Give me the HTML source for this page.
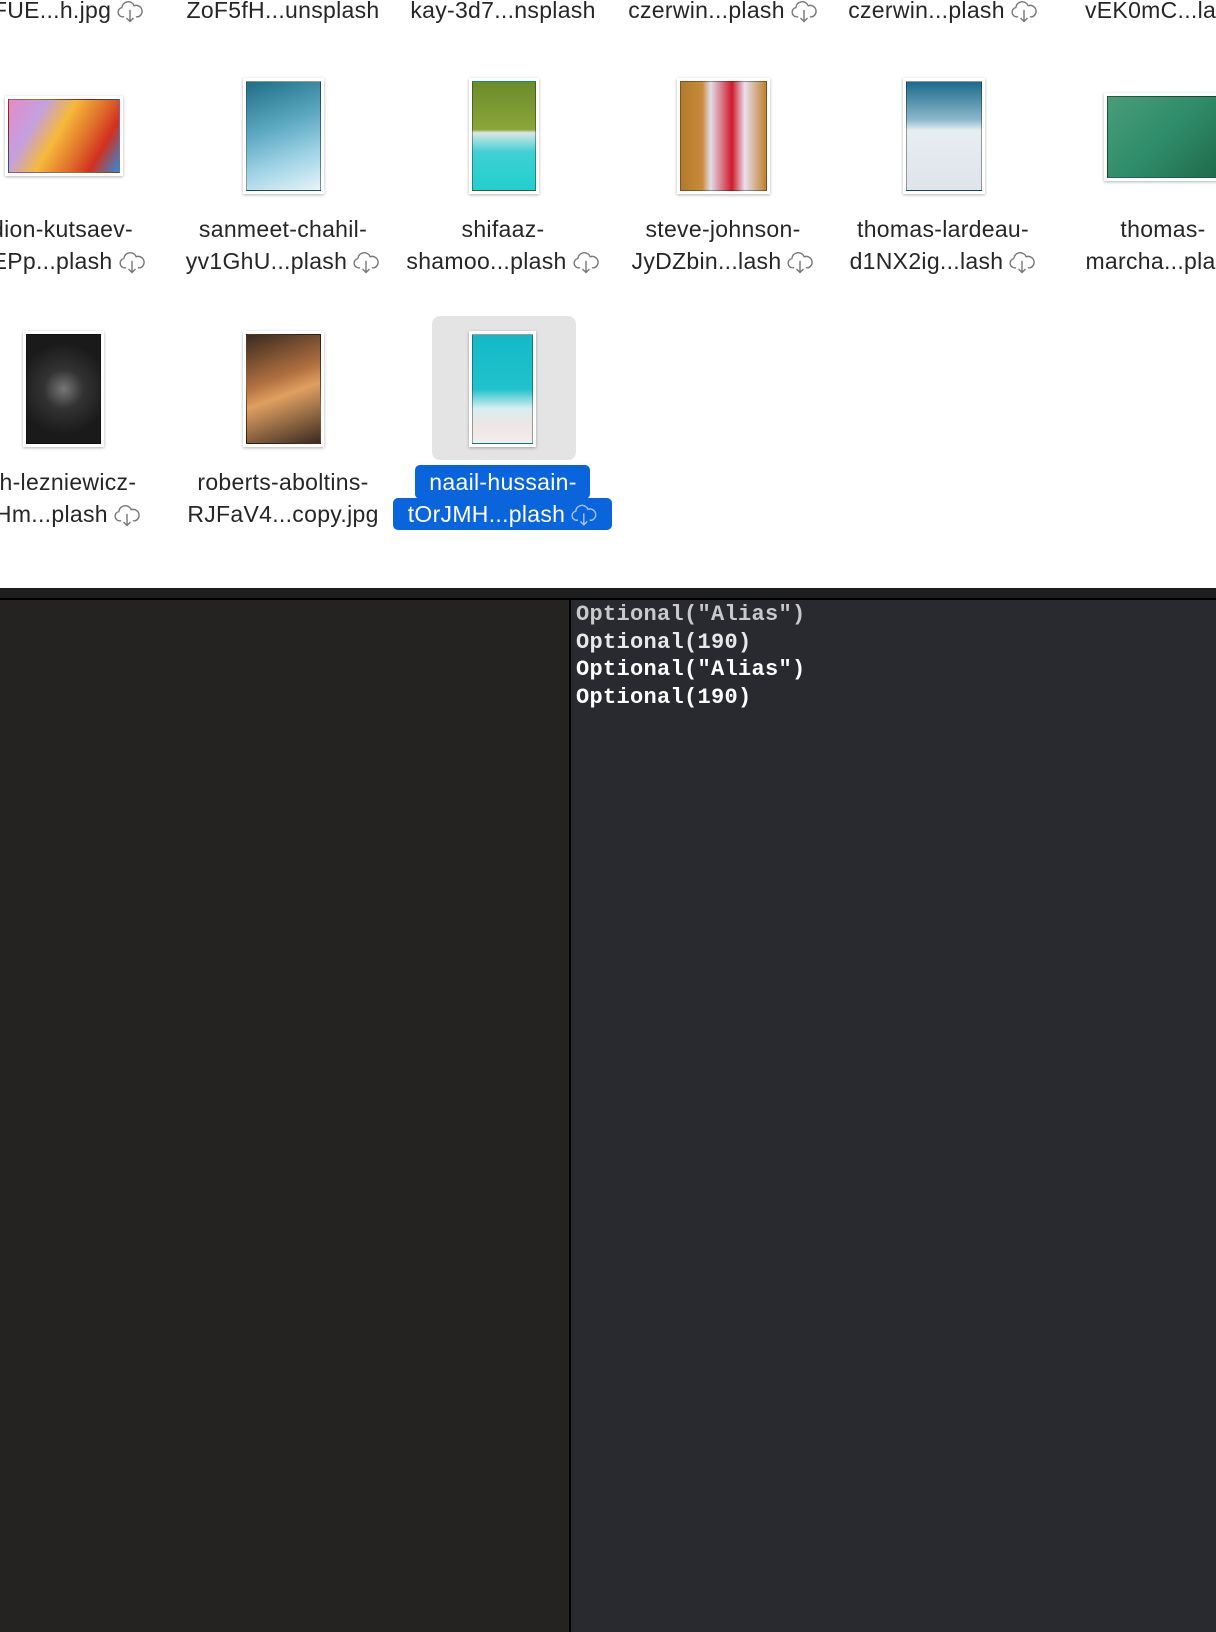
<!DOCTYPE html>
<html><head><meta charset="utf-8"><style>
*{margin:0;padding:0;box-sizing:border-box}
body{width:1216px;height:1632px;overflow:hidden;background:#fff;position:relative;font-family:"Liberation Sans",sans-serif}
.t{position:absolute;width:240px;text-align:center;font-size:23px;letter-spacing:0.3px;color:#262626;line-height:32px;white-space:nowrap}
.f{position:absolute;background:#fff;padding:3px;box-shadow:0 1px 3px rgba(0,0,0,.3)}
.f div{width:100%;height:100%;border:1px solid rgba(0,0,0,.35)}
.c{display:inline-block;width:28px;height:24px;vertical-align:-5px;margin-left:5px}
.m{position:absolute;left:576px;font-family:"Liberation Mono","DejaVu Sans Mono",monospace;font-weight:bold;font-size:22px;line-height:27.7px;color:#fff;letter-spacing:0.3px}
</style></head><body>
<svg width="0" height="0" style="position:absolute"><defs><symbol id="cl" viewBox="0 0 24 20"><path d="M7 15H5.5A4 4 0 0 1 5 7.1 5.5 5.5 0 0 1 15.6 5.5 4.2 4.2 0 0 1 19 15H17" fill="none" stroke="#777" stroke-width="1.2"/><path d="M12 9v10M9 16l3 3 3-3" fill="none" stroke="#777" stroke-width="1.2"/></symbol></defs></svg>

<div class="t" style="left:-58px;top:-6px">5FUE...h.jpg<svg class="c"><use href="#cl"/></svg></div>
<div class="t" style="left:163px;top:-6px">ZoF5fH...unsplash</div>
<div class="t" style="left:383px;top:-6px">kay-3d7...nsplash</div>
<div class="t" style="left:603px;top:-6px">czerwin...plash<svg class="c"><use href="#cl"/></svg></div>
<div class="t" style="left:823px;top:-6px">czerwin...plash<svg class="c"><use href="#cl"/></svg></div>
<div class="t" style="left:1043px;top:-6px">vEK0mC...lash</div>

<div class="f" style="left:5px;top:96px;width:118px;height:80px"><div style="background:linear-gradient(120deg,#e58ac8 0%,#c4a0e0 25%,#f6b93a 45%,#e0702a 65%,#d23020 80%,#2a8ee0 100%)"></div></div>
<div class="f" style="left:243px;top:78px;width:81px;height:116px"><div style="background:linear-gradient(160deg,#1f6d86 0%,#5aa7c0 40%,#9fd3e6 70%,#e6f4f8 100%)"></div></div>
<div class="f" style="left:469px;top:78px;width:70px;height:116px"><div style="background:linear-gradient(180deg,#6b8c2a 0%,#8aa53a 44%,#d8e8e6 47%,#40cfd2 65%,#22d0cf 100%)"></div></div>
<div class="f" style="left:677px;top:78px;width:93px;height:116px"><div style="background:linear-gradient(90deg,#b47a2a 0%,#c98a3c 25%,#e0dde8 35%,#d01a2a 60%,#e8e0ee 75%,#c08030 100%)"></div></div>
<div class="f" style="left:903px;top:78px;width:82px;height:116px"><div style="background:linear-gradient(180deg,#1c6a8d 0%,#8bb8cc 35%,#e6eef2 45%,#dfe4ea 100%)"></div></div>
<div class="f" style="left:1104px;top:93px;width:120px;height:88px"><div style="background:linear-gradient(135deg,#4a9c7a 0%,#2f8c6a 50%,#1e6a4a 100%)"></div></div>

<div class="t" style="left:-58px;top:213px">dion-kutsaev-<br>oEPp...plash<svg class="c"><use href="#cl"/></svg></div>
<div class="t" style="left:163px;top:213px">sanmeet-chahil-<br>yv1GhU...plash<svg class="c"><use href="#cl"/></svg></div>
<div class="t" style="left:383px;top:213px">shifaaz-<br>shamoo...plash<svg class="c"><use href="#cl"/></svg></div>
<div class="t" style="left:603px;top:213px">steve-johnson-<br>JyDZbin...lash<svg class="c"><use href="#cl"/></svg></div>
<div class="t" style="left:823px;top:213px">thomas-lardeau-<br>d1NX2ig...lash<svg class="c"><use href="#cl"/></svg></div>
<div class="t" style="left:1043px;top:213px">thomas-<br>marcha...plash</div>

<div style="position:absolute;left:432px;top:316px;width:144px;height:144px;background:#e4e4e4;border-radius:8px"></div>
<div class="f" style="left:23px;top:331px;width:81px;height:116px"><div style="background:radial-gradient(circle at 50% 50%,#777 0%,#333 30%,#1a1a1a 70%)"></div></div>
<div class="f" style="left:243px;top:331px;width:81px;height:116px"><div style="background:linear-gradient(160deg,#3a2a20 0%,#b07040 40%,#e0a060 55%,#3a2a22 100%)"></div></div>
<div class="f" style="left:469px;top:331px;width:67px;height:116px"><div style="background:linear-gradient(180deg,#14b8c8 0%,#20c2cc 50%,#d8eef0 68%,#f0e6e4 85%,#f2eeee 100%)"></div></div>

<div class="t" style="left:-58px;top:466px">ch-lezniewicz-<br>zHm...plash<svg class="c"><use href="#cl"/></svg></div>
<div class="t" style="left:163px;top:466px">roberts-aboltins-<br>RJFaV4...copy.jpg</div>
<div style="position:absolute;left:415px;top:465px;width:175px;height:34px;background:#0a64dc;border-radius:5px"></div>
<div style="position:absolute;left:393px;top:498px;width:219px;height:32px;background:#0a64dc;border-radius:5px"></div>
<div class="t" style="left:383px;top:466px;color:#fff">naail-hussain-<br>tOrJMH...plash<svg class="c" style="opacity:.8"><path d="M7 15H5.5A4 4 0 0 1 5 7.1 5.5 5.5 0 0 1 15.6 5.5 4.2 4.2 0 0 1 19 15H17" fill="none" stroke="#cfe0ff" stroke-width="1.2" transform="scale(1.15)"/><path d="M12 9v10M9 16l3 3 3-3" fill="none" stroke="#cfe0ff" stroke-width="1.2" transform="scale(1.15)"/></svg></div>

<div style="position:absolute;left:0;top:588px;width:1216px;height:1044px;background:#1d1d1d"></div>
<div style="position:absolute;left:0;top:598px;width:1216px;height:2px;background:#000"></div>
<div style="position:absolute;left:0;top:600px;width:569px;height:1032px;background:#242322"></div>
<div style="position:absolute;left:569px;top:600px;width:2px;height:1032px;background:#000"></div>
<div style="position:absolute;left:571px;top:600px;width:645px;height:1032px;background:#292a2f"></div>
<div class="m" style="top:601px;color:#c9c9cb">Optional("Alias")</div>
<div class="m" style="top:629px;color:#e8e8ea">Optional(190)</div>
<div class="m" style="top:656px">Optional("Alias")</div>
<div class="m" style="top:684px">Optional(190)</div>
</body></html>
